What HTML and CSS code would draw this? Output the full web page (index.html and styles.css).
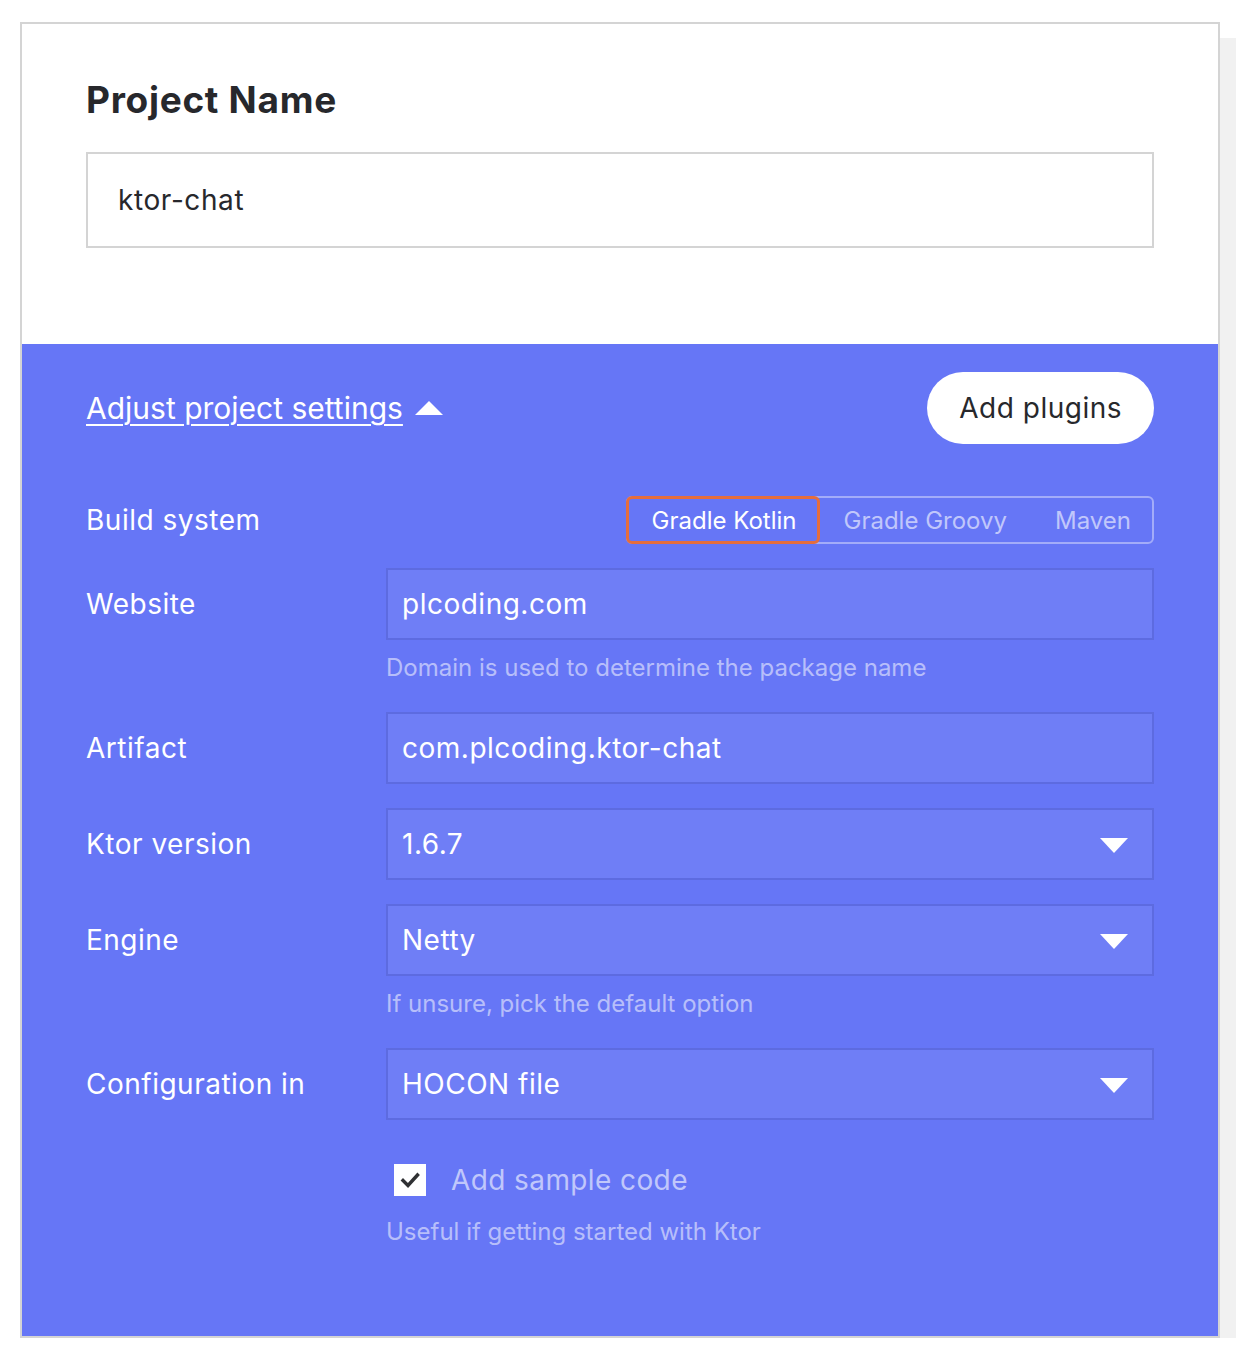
FILE: index.html
```html
<!DOCTYPE html>
<html lang="en">
<head>
<meta charset="utf-8">
<title>Ktor project generator</title>
<link rel="stylesheet" href="styles.css">
</head>
<body>
<div class="card">
  <section class="top">
    <h1 class="title">Project Name</h1>
    <div class="name-input">ktor-chat</div>
  </section>
  <section class="settings">
    <div class="settings-head">
      <a class="adjust" href="#">Adjust project settings</a>
      <span class="tri-up"></span>
      <span class="spacer"></span>
      <button class="add-plugins">Add plugins</button>
    </div>

    <div class="row row-build">
      <div class="label label-short">Build system</div>
      <div class="control control-right">
        <div class="segmented">
          <span class="seg seg-active">Gradle Kotlin</span>
          <span class="seg seg-mid">Gradle Groovy</span>
          <span class="seg seg-last">Maven</span>
        </div>
      </div>
    </div>

    <div class="row">
      <div class="label">Website</div>
      <div class="control">
        <div class="field">plcoding.com</div>
        <div class="hint">Domain is used to determine the package name</div>
      </div>
    </div>

    <div class="row">
      <div class="label">Artifact</div>
      <div class="control">
        <div class="field">com.plcoding.ktor-chat</div>
      </div>
    </div>

    <div class="row">
      <div class="label">Ktor version</div>
      <div class="control">
        <div class="field field-select">1.6.7<span class="tri-down"></span></div>
      </div>
    </div>

    <div class="row">
      <div class="label">Engine</div>
      <div class="control">
        <div class="field field-select">Netty<span class="tri-down"></span></div>
        <div class="hint">If unsure, pick the default option</div>
      </div>
    </div>

    <div class="row">
      <div class="label">Configuration in</div>
      <div class="control">
        <div class="field field-select">HOCON file<span class="tri-down"></span></div>
      </div>
    </div>

    <div class="row row-check">
      <div class="label"></div>
      <div class="control">
        <div class="check-line">
          <span class="checkbox">
            <svg width="32" height="32" viewBox="0 0 32 32"><path d="M9 16.5 L14 21.5 L23.5 11" fill="none" stroke="#303133" stroke-width="3.4" stroke-linecap="square"/></svg>
          </span>
          <span class="check-text">Add sample code</span>
        </div>
        <div class="hint">Useful if getting started with Ktor</div>
      </div>
    </div>
  </section>
</div>
</body>
</html>
```

FILE: styles.css
```css
* { box-sizing: border-box; }

body {
  margin: 0;
  background: #ffffff;
  font-family: Inter, "Noto Sans", "Liberation Sans", sans-serif;
  color: #27282c;
}

.card {
  margin: 22px 0 0 20px;
  width: 1200px;
  border: 2px solid #d4d4d4;
  box-shadow: 16px 16px 0 #f1f1f1;
  background: #ffffff;
}

.top {
  padding: 54px 64px 96px;
}

.title {
  margin: 0 0 30px;
  font-size: 37px;
  line-height: 44px;
  font-weight: 700;
  color: #27282c;
  letter-spacing: 0.7px;
}

.name-input {
  height: 96px;
  border: 2px solid #d4d4d4;
  padding: 0 30px;
  display: flex;
  align-items: center;
  font-size: 28px;
  letter-spacing: 0.6px;
  color: #27282c;
}

.settings {
  background: #6676f6;
  padding: 28px 64px 84px;
  color: #ffffff;
}

.settings-head {
  display: flex;
  align-items: center;
  height: 72px;
  margin-bottom: 52px;
}

.adjust {
  color: #ffffff;
  font-size: 30px;
  text-decoration: underline;
  text-decoration-thickness: 2px;
  text-underline-offset: 5px;
}

.tri-up {
  width: 0;
  height: 0;
  margin-left: 12px;
  border-left: 14px solid transparent;
  border-right: 14px solid transparent;
  border-bottom: 14px solid #ffffff;
}

.spacer { flex: 1; }

.add-plugins {
  height: 72px;
  padding: 0 32px;
  border: none;
  border-radius: 36px;
  background: #ffffff;
  color: #27282c;
  font-family: inherit;
  font-size: 28px;
  letter-spacing: 0.5px;
}

.row {
  display: grid;
  grid-template-columns: 300px 1fr;
  margin-bottom: 24px;
}

.label {
  font-size: 28px;
  line-height: 72px;
  letter-spacing: 0.5px;
  color: #ffffff;
}

.label-short { line-height: 48px; }

.control-right {
  display: flex;
  justify-content: flex-end;
}

.segmented {
  display: flex;
  height: 48px;
  border: 2px solid rgba(255, 255, 255, 0.4);
  border-radius: 6px;
}

.seg {
  display: flex;
  align-items: center;
  padding: 0 25px;
  font-size: 24px;
  color: rgba(255, 255, 255, 0.6);
}

.seg-mid { padding: 0 23px 0 24px; }

.seg-last { padding: 0 21px 0 25px; }

.seg-active {
  margin: -2px 0 -2px -2px;
  padding: 0 20px 0 23px;
  border: 3px solid #e56d3d;
  border-radius: 6px;
  color: #ffffff;
}

.field {
  position: relative;
  height: 72px;
  border: 2px solid rgba(40, 50, 160, 0.25);
  background: rgba(255, 255, 255, 0.06);
  padding: 0 14px;
  display: flex;
  align-items: center;
  font-size: 28px;
  letter-spacing: 0.5px;
  color: #ffffff;
}

.tri-down {
  position: absolute;
  right: 24px;
  top: 28px;
  width: 0;
  height: 0;
  border-left: 14px solid transparent;
  border-right: 14px solid transparent;
  border-top: 15px solid #ffffff;
}

.hint {
  margin-top: 16px;
  margin-bottom: 8px;
  font-size: 24px;
  line-height: 24px;
  color: rgba(255, 255, 255, 0.55);
}

.row-check {
  margin-top: 44px;
  margin-bottom: 0;
}

.row-check .label { line-height: 32px; }

.check-line {
  display: flex;
  align-items: center;
  height: 32px;
  padding-left: 8px;
}

.checkbox {
  width: 32px;
  height: 32px;
  background: #ffffff;
  display: block;
}

.checkbox svg { display: block; }

.check-text {
  margin-left: 25px;
  font-size: 28px;
  letter-spacing: 0.4px;
  color: rgba(255, 255, 255, 0.6);
}

.row-check .hint { margin-top: 24px; }
```
